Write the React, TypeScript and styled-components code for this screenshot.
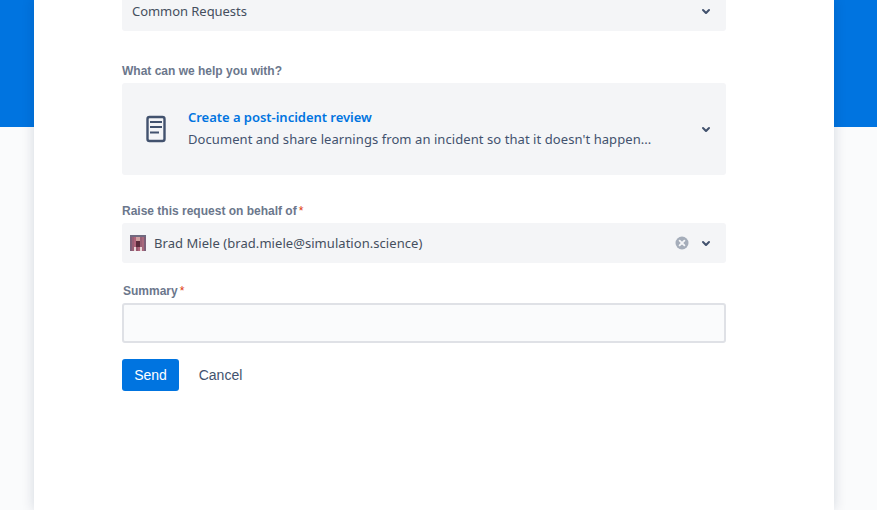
import styled, { createGlobalStyle } from "styled-components";

const GlobalStyle = createGlobalStyle`
  html, body {
    margin: 0;
    padding: 0;
    height: 510px;
    overflow: hidden;
  }
`;

const Page = styled.div`
  height: 510px;
  overflow: hidden;
  padding: 0 43px 0 34px;
  background: linear-gradient(#0074e0 127px, #fafbfc 127px);
`;

const Card = styled.main`
  width: 800px;
  height: 510px;
  box-sizing: border-box;
  padding: 0 108px 0 88px;
  background: #fff;
  box-shadow: 0 0 12px rgba(9, 30, 66, 0.16);
  display: flex;
  flex-direction: column;
`;

const Select = styled.div<{ $height: number; $top?: number }>`
  width: 604px;
  height: ${({ $height }) => $height}px;
  margin-top: ${({ $top = 0 }) => $top}px;
  flex-shrink: 0;
  box-sizing: border-box;
  border-radius: 3px;
  background: #f4f5f7;
  display: flex;
  align-items: center;
  color: #42526e;
  font-family: "Noto Sans", sans-serif;
  font-size: 13px;
`;

const Value = styled.span`
  flex: 1;
  color: #454f5e;
  letter-spacing: 0.05px;
  white-space: nowrap;
`;

const PlainValue = styled(Value)`
  padding-left: 10px;
  letter-spacing: -0.05px;
`;

const Label = styled.label<{ $top: number; $left?: number }>`
  display: block;
  height: 14px;
  line-height: 14px;
  margin: ${({ $top }) => $top}px 0 5px ${({ $left = 0 }) => $left}px;
  color: #6b778c;
  font-family: "Liberation Sans", Arial, sans-serif;
  font-size: 12px;
  font-weight: 700;
`;

const Required = styled.span`
  margin-left: 2px;
  color: #de350b;
  font-weight: 400;
`;

const DocIcon = styled.svg`
  width: 40px;
  height: 40px;
  margin-left: 14px;
  flex-shrink: 0;
  color: #42526e;
`;

const OptionText = styled.div`
  flex: 1;
  margin: 0 0 2px 12px;
  min-width: 0;
`;

const OptionTitle = styled.div`
  height: 22px;
  line-height: 22px;
  color: #0074e0;
  font-weight: 600;
  font-size: 13px;
  letter-spacing: -0.03px;
`;

const OptionBody = styled.div`
  height: 22px;
  line-height: 22px;
  color: #42526e;
  font-size: 13px;
  letter-spacing: 0.07px;
  white-space: nowrap;
`;

const Chevron = styled.svg`
  width: 24px;
  height: 24px;
  margin-right: 8px;
  flex-shrink: 0;
  color: #42526e;
`;

const ClearIcon = styled.svg`
  width: 16px;
  height: 16px;
  margin-right: 4px;
  flex-shrink: 0;
  color: #a5adba;
`;

const Avatar = styled.svg`
  width: 16px;
  height: 16px;
  margin: 0 8px;
  flex-shrink: 0;
`;

const SummaryInput = styled.input`
  display: block;
  width: 604px;
  height: 40px;
  flex-shrink: 0;
  box-sizing: border-box;
  border: 2px solid #dfe1e6;
  border-radius: 3px;
  background: #fafbfc;
  outline: none;
`;

const Actions = styled.div`
  display: flex;
  align-items: center;
  margin-top: 16px;
`;

const SendButton = styled.button`
  width: 57px;
  height: 32px;
  padding: 0;
  border: 0;
  border-radius: 3px;
  background: #0074e0;
  color: #fff;
  font-family: "Liberation Sans", Arial, sans-serif;
  font-size: 14px;
  font-weight: 400;
`;

const CancelButton = styled.button`
  width: 83px;
  height: 32px;
  padding: 0;
  border: 0;
  background: none;
  color: #42526e;
  font-family: "Liberation Sans", Arial, sans-serif;
  font-size: 14px;
`;

const ChevronDown = () => (
  <Chevron viewBox="0 0 24 24" fill="currentColor">
    <path d="M8.292 10.293a1.009 1.009 0 000 1.419l2.939 2.965c.218.215.5.322.779.322s.556-.107.769-.322l2.93-2.955a1.01 1.01 0 000-1.419.987.987 0 00-1.406 0l-2.298 2.317-2.307-2.327a.99.99 0 00-1.406 0z" />
  </Chevron>
);

const avatarColumns = ["#7d5f78", "#9a5f74", "#b0647a", "#95566c", "#b0647a", "#9a5f74", "#a8687c", "#7d5f78"];

export default function App() {
  return (
    <>
      <GlobalStyle />
      <Page>
        <Card>
          <Select $height={40} $top={-9}>
            <PlainValue>Common Requests</PlainValue>
            <ChevronDown />
          </Select>

          <Label $top={33}>What can we help you with?</Label>
          <Select $height={92}>
            <DocIcon viewBox="0 0 40 40" fill="none">
              <rect x="11.5" y="8" width="17" height="24" rx="2" stroke="currentColor" strokeWidth="2.4" />
              <path d="M14 13h12M14 18h12M14 23.5h9" stroke="currentColor" strokeWidth="2" />
            </DocIcon>
            <OptionText>
              <OptionTitle>Create a post-incident review</OptionTitle>
              <OptionBody>Document and share learnings from an incident so that it doesn't happen...</OptionBody>
            </OptionText>
            <ChevronDown />
          </Select>

          <Label $top={29}>
            Raise this request on behalf of<Required>*</Required>
          </Label>
          <Select $height={40}>
            <Avatar viewBox="0 0 8 8" shapeRendering="crispEdges">
              <filter id="soft">
                <feGaussianBlur stdDeviation="0.3" />
              </filter>
              <g filter="url(#soft)">
                {avatarColumns.map((color, i) => (
                  <rect key={i} x={i} y="0" width="1" height="8" fill={color} />
                ))}
                <rect x="0" y="0" width="8" height="1" fill="#6f6a80" />
                <rect x="3" y="1" width="2" height="2" fill="#d0a0a0" />
                <rect x="3" y="3" width="2" height="3" fill="#5a2c3a" />
                <rect x="2" y="6" width="1" height="2" fill="#ead8da" />
                <rect x="5" y="6" width="1" height="2" fill="#ead8da" />
              </g>
            </Avatar>
            <Value>Brad Miele (brad.miele@simulation.science)</Value>
            <ClearIcon viewBox="0 0 16 16">
              <circle cx="8" cy="8" r="6.5" fill="currentColor" />
              <path d="M5.6 5.6l4.8 4.8M10.4 5.6l-4.8 4.8" stroke="#f4f5f7" strokeWidth="1.8" strokeLinecap="round" />
            </ClearIcon>
            <ChevronDown />
          </Select>

          <Label $top={21} $left={1}>
            Summary<Required>*</Required>
          </Label>
          <SummaryInput />

          <Actions>
            <SendButton>Send</SendButton>
            <CancelButton>Cancel</CancelButton>
          </Actions>
        </Card>
      </Page>
    </>
  );
}
